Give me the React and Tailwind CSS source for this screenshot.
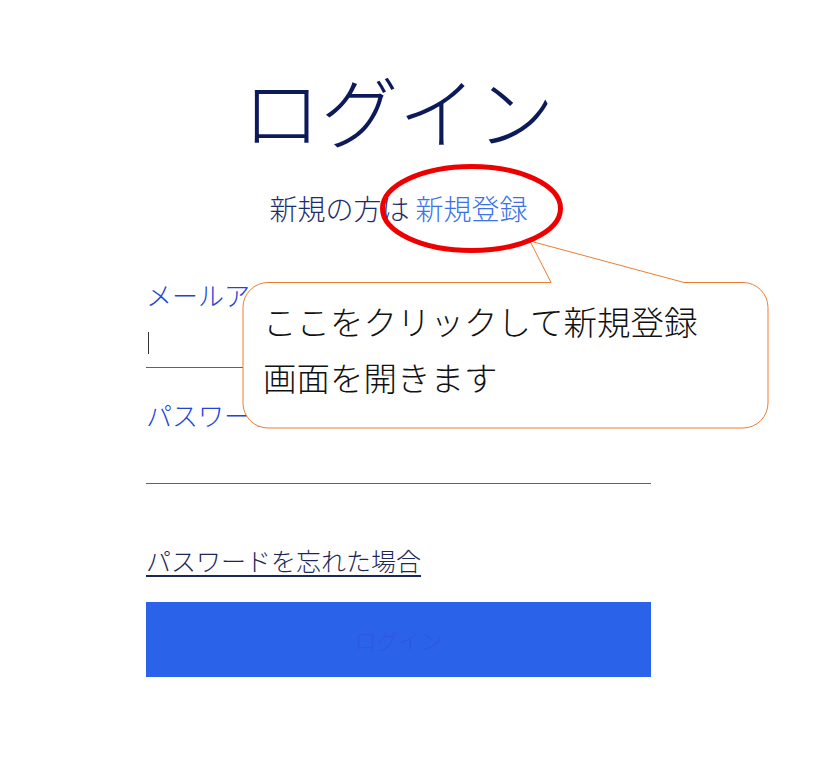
const jp = { fontFamily: '"Noto Sans CJK JP", "Noto Sans", sans-serif' }

export default function App() {
  return (
    <div className="relative min-h-[783px] bg-white font-light" style={jp}>
      <div className="w-[505px] ml-[146px] pt-[70px]">
        <h1 className="text-center text-[78px] leading-none font-light text-[#0c1a5a]">ログイン</h1>

        <p className="mt-[46px] text-center text-[28px] leading-none text-[#1d2d6b]">
          新規の方は <a className="text-[#3b73e6]">新規登録</a>
        </p>

        <div className="mt-[60px]">
          <label className="block text-[26px] leading-none text-[#2444d6]">メールアドレス</label>
          <div className="mt-[22px] h-[38px] border-b border-[#3a5fd8] flex items-start">
            <div className="ml-[2px] mt-[2px] w-px h-[22px] bg-[#333]" />
          </div>
        </div>

        <div className="mt-[34px]">
          <label className="block text-[26px] leading-none text-[#2444d6]">パスワード</label>
          <div className="mt-[18px] h-[38px] border-b border-[#3a5fd8]" />
        </div>

        <a className="block mt-[64px] w-fit text-[25px] leading-none text-[#1d2756] underline underline-offset-4">
          パスワードを忘れた場合
        </a>

        <button className="mt-[29px] w-full h-[75px] bg-[#2a63ea] text-[22px] text-[#3156e6]">
          ログイン
        </button>
      </div>

      <svg className="absolute left-0 top-0 pointer-events-none" width="818" height="783">
        <path
          d="M 268 282.5 H 551 L 530 241 L 684 282.5 H 743 A 25 25 0 0 1 768 307.5 V 403 A 25 25 0 0 1 743 428 H 268 A 25 25 0 0 1 243 403 V 307.5 A 25 25 0 0 1 268 282.5 Z"
          fill="white"
          stroke="#ed7d31"
          strokeWidth="1"
        />
        <ellipse cx="471.5" cy="208.5" rx="89" ry="42" fill="none" stroke="#ee0000" strokeWidth="5" />
      </svg>

      <div className="absolute left-[263px] top-[293px] text-[33.5px] leading-[56px] text-[#111]">
        <div>ここをクリックして新規登録</div>
        <div>画面を開きます</div>
      </div>
    </div>
  )
}
